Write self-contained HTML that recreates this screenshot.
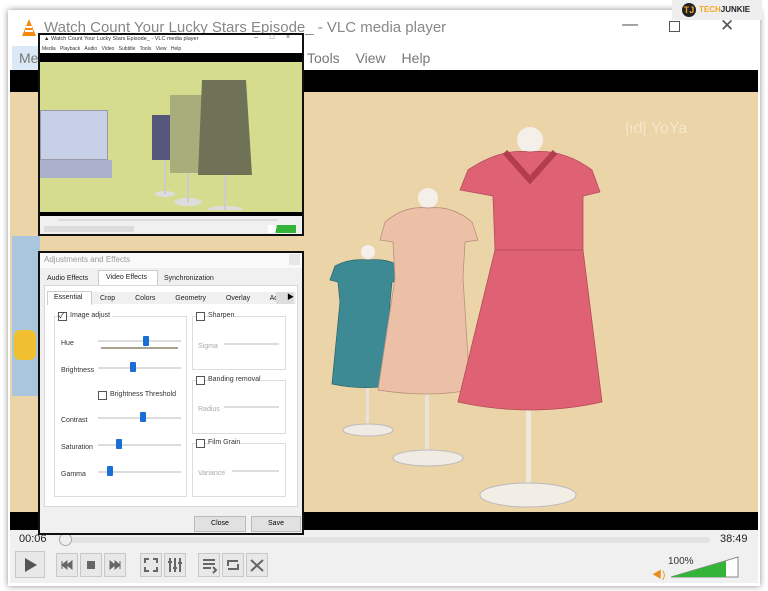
<!DOCTYPE html>
<html><head><meta charset="utf-8"><style>
*{margin:0;padding:0;box-sizing:border-box}
body{width:768px;height:591px;background:#fff;position:relative;overflow:hidden;font-family:"Liberation Sans","Noto Sans CJK SC",sans-serif}
.a{position:absolute}
.btn{position:absolute;top:553px;height:24px;border:1px solid #c8c8c8;background:#e8e8e8}
.lbl{position:absolute;font-size:7px;color:#333}
.trk{position:absolute;height:2px;background:#ddd}
.th{position:absolute;width:6px;height:10px;background:#1a6fd6;border-radius:1px}
.cb{position:absolute;width:9px;height:9px;border:1px solid #555;background:#fff}
.grp{position:absolute;border:1px solid #ddd}
</style></head><body>
<div class="a" style="left:8px;top:10px;width:752px;height:576px;box-shadow:0 0 6px rgba(0,0,0,.45)"></div>
<div class="a" style="left:10px;top:12px;width:748px;height:34px;background:#fff"></div>
<svg class="a" style="left:20px;top:18px" width="18" height="20"><path d="M9 1 L16 18 L2 18 Z" fill="#f28a10"/><path d="M6 9h6M5 13h8" stroke="#fff" stroke-width="2"/></svg>
<div class="a" style="left:44px;top:19px;font-size:15px;color:#888">Watch Count Your Lucky Stars Episode_ - VLC media player</div>
<div class="a" style="left:622px;top:16px;font-size:16px;color:#555">—</div>
<div class="a" style="left:669px;top:21px;width:11px;height:11px;border:1px solid #555"></div>
<div class="a" style="left:720px;top:16px;font-size:17px;color:#555">✕</div>
<div class="a" style="left:672px;top:0;width:90px;height:20px;background:#eee"></div>
<div class="a" style="left:682px;top:3px;width:14px;height:14px;border-radius:50%;background:#222;color:#f5a623;font-size:9px;text-align:center;line-height:14px;font-weight:bold">TJ</div>
<div class="a" style="left:699px;top:5px;font-size:8px;font-weight:bold;color:#222"><span style="color:#f5a623">TECH</span>JUNKIE</div>
<div class="a" style="left:10px;top:46px;width:748px;height:24px;background:#fff"></div>
<div class="a" style="left:12px;top:46px;width:40px;height:24px;background:#dbe9f7"></div>
<div class="a" style="left:19px;top:50px;font-size:14px;color:#777">Me</div>
<div class="a" style="left:307px;top:50px;font-size:14px;color:#777;word-spacing:12px">Tools View Help</div>
<div class="a" style="left:10px;top:70px;width:748px;height:22px;background:#000"></div>
<div class="a" style="left:10px;top:92px;width:748px;height:420px;background:#ecd4a9"></div>
<div class="a" style="left:12px;top:236px;width:28px;height:160px;background:#a9c6dc"></div>
<div class="a" style="left:14px;top:330px;width:22px;height:30px;background:#f0c030;border-radius:6px"></div>
<svg class="a" style="left:300px;top:90px" width="460" height="422">
<text x="325" y="43" font-size="16" fill="#f4e6cc" font-family="Liberation Sans">|ıd| YoYa</text>
<rect x="66" y="290" width="3" height="50" fill="#e8e2d8"/><ellipse cx="68" cy="340" rx="25" ry="6" fill="#f0ebe3" stroke="#bbb"/>
<circle cx="68" cy="162" r="7" fill="#f4efe8"/>
<path d="M35 176 Q50 168 68 170 Q86 168 100 176 L104 190 L92 192 L90 212 L88 296 Q60 300 32 294 L40 212 L38 192 L30 190 Z" fill="#3e8a94" stroke="#2c6a72" stroke-width="0.8"/>
<rect x="125" y="300" width="4" height="70" fill="#e8e2d8"/><ellipse cx="128" cy="368" rx="35" ry="8" fill="#f0ebe3" stroke="#bbb"/>
<circle cx="128" cy="108" r="10" fill="#f4efe8"/>
<path d="M85 132 Q105 115 128 118 Q152 115 172 132 L178 150 L165 152 L163 188 L170 300 Q128 308 78 300 L95 188 L93 152 L80 150 Z" fill="#ecc0a6" stroke="#b99080" stroke-width="0.8"/>
<rect x="226" y="320" width="5" height="85" fill="#ede7dc"/><ellipse cx="228" cy="405" rx="48" ry="12" fill="#f2ede5" stroke="#bbb"/>
<circle cx="230" cy="50" r="13" fill="#f4efe8"/>
<path d="M168 80 Q200 58 230 62 Q262 58 292 80 L300 102 L283 106 L283 160 L302 312 Q230 328 158 312 L195 160 L193 106 L160 100 Z" fill="#de6273" stroke="#b34a5a" stroke-width="0.8"/>
<path d="M205 62 L230 90 L255 62" fill="none" stroke="#b33d4e" stroke-width="6"/>
<path d="M195 160 L283 160" stroke="#b34a5a" stroke-width="0.8"/>
</svg>
<div class="a" style="left:10px;top:512px;width:748px;height:18px;background:#000"></div>
<div class="a" style="left:10px;top:530px;width:748px;height:53px;background:#f0f0f0"></div>
<div class="a" style="left:19px;top:533px;font-size:11px;color:#222">00:06</div>
<div class="a" style="left:60px;top:537px;width:650px;height:6px;background:#e2e2e2;border-radius:3px"></div>
<div class="a" style="left:59px;top:533px;width:13px;height:13px;border-radius:50%;background:#eee;border:1px solid #aaa"></div>
<div class="a" style="left:720px;top:533px;font-size:11px;color:#222">38:49</div>
<div class="btn" style="left:15px;width:30px;height:27px;top:551px"><svg width="28" height="26"><path d="M9 6 L21 13 L9 20Z" fill="#555"/></svg></div>
<div class="btn" style="left:56px;width:22px"><svg width="20" height="22"><path d="M5 7v8M15 7l-5 4 5 4zM10 7l-5 4 5 4z" fill="#666" stroke="#666"/></svg></div>
<div class="btn" style="left:80px;width:22px"><svg width="20" height="22"><rect x="6" y="7" width="8" height="8" fill="#666"/></svg></div>
<div class="btn" style="left:104px;width:22px"><svg width="20" height="22"><path d="M15 7v8M5 7l5 4-5 4zM10 7l5 4-5 4z" fill="#666" stroke="#666"/></svg></div>
<div class="btn" style="left:140px;width:22px"><svg width="20" height="22"><path d="M4 9V5h4M12 5h4v4M16 13v4h-4M8 17H4v-4" fill="none" stroke="#666" stroke-width="2"/></svg></div>
<div class="btn" style="left:164px;width:22px"><svg width="20" height="22"><path d="M5 4v14M10 4v14M15 4v14M3 8h4M8 14h4M13 9h4" stroke="#666" stroke-width="2"/></svg></div>
<div class="btn" style="left:198px;width:22px"><svg width="20" height="22"><path d="M4 6h12M4 10h12M4 14h8M14 13l3 3-3 3" fill="none" stroke="#666" stroke-width="2"/></svg></div>
<div class="btn" style="left:222px;width:22px"><svg width="20" height="22"><path d="M5 12V7h10M15 10v5H5" fill="none" stroke="#666" stroke-width="2"/></svg></div>
<div class="btn" style="left:246px;width:22px"><svg width="20" height="22"><path d="M4 6l12 11M4 17L16 6" stroke="#666" stroke-width="2"/></svg></div>
<div class="a" style="left:652px;top:566px;font-size:10px;color:#e8901a">◀)</div>
<div class="a" style="left:668px;top:556px;font-size:10px;color:#333">100%</div>
<svg class="a" style="left:670px;top:556px" width="70" height="22"><path d="M1 21 L68 1 L68 21 Z" fill="#fff" stroke="#888"/><path d="M1 21 L56 5 L56 21 Z" fill="#34b53a"/></svg>
<div class="a" style="left:38px;top:33px;width:266px;height:203px;background:#fff;border:2px solid #111"></div>
<div class="a" style="left:44px;top:36px;font-size:5.5px;color:#333">▲ Watch Count Your Lucky Stars Episode_ - VLC media player</div>
<div class="a" style="left:254px;top:34px;font-size:7px;color:#555;word-spacing:10px">– □ ×</div>
<div class="a" style="left:42px;top:46px;font-size:5px;color:#333;word-spacing:3px">Media Playback Audio Video Subtitle Tools View Help</div>
<div class="a" style="left:40px;top:53px;width:262px;height:9px;background:#000"></div>
<div class="a" style="left:40px;top:62px;width:262px;height:150px;background:#d6dc8e"></div>
<div class="a" style="left:40px;top:110px;width:68px;height:50px;background:#c8d0e8;border:1px solid #99a"></div>
<div class="a" style="left:40px;top:160px;width:72px;height:18px;background:#aab0cc"></div>
<svg class="a" style="left:140px;top:70px" width="140" height="140">
<path d="M12 45h22l-2 45h-20z" fill="#55577a"/><ellipse cx="25" cy="124" rx="10" ry="3" fill="#ddd"/><rect x="24" y="90" width="2" height="34" fill="#ccc"/>
<path d="M30 25h36l-2 78h-34z" fill="#a8ad7c"/><ellipse cx="48" cy="132" rx="14" ry="4" fill="#ddd"/><rect x="47" y="103" width="2" height="29" fill="#ccc"/>
<path d="M62 10h44l6 95h-54z" fill="#707258"/><ellipse cx="85" cy="140" rx="18" ry="4" fill="#ddd"/><rect x="84" y="105" width="2" height="35" fill="#ccc"/>
</svg>
<div class="a" style="left:40px;top:212px;width:262px;height:4px;background:#000"></div>
<div class="a" style="left:40px;top:216px;width:262px;height:18px;background:#f0f0f0"></div>
<div class="a" style="left:58px;top:219px;width:220px;height:2px;background:#ddd"></div>
<div class="a" style="left:44px;top:226px;width:90px;height:6px;background:#ddd"></div>
<div class="a" style="left:268px;top:225px;width:28px;height:8px;background:linear-gradient(100deg,#fff 30%,#34b53a 30%)"></div>
<div class="a" style="left:38px;top:251px;width:266px;height:284px;background:#f0f0f0;border:2px solid #111"></div>
<div class="a" style="left:40px;top:253px;width:262px;height:15px;background:#fafafa"></div>
<div class="a" style="left:44px;top:255px;font-size:8px;color:#999">Adjustments and Effects</div>
<div class="a" style="left:289px;top:254px;width:11px;height:11px;background:#e6e6e6"></div>
<div class="a" style="left:47px;top:275px;font-size:7px;color:#222">Audio Effects</div>
<div class="a" style="left:98px;top:270px;width:60px;height:15px;background:#fff;border:1px solid #ccc;border-bottom:none"></div>
<div class="a" style="left:106px;top:274px;font-size:7px;color:#222">Video Effects</div>
<div class="a" style="left:164px;top:275px;font-size:7px;color:#222">Synchronization</div>
<div class="a" style="left:44px;top:285px;width:254px;height:222px;background:#fff;border:1px solid #d8d8d8"></div>
<div class="a" style="left:47px;top:291px;width:45px;height:14px;background:#fff;border:1px solid #ccc;border-bottom:none"></div>
<div class="a" style="left:92px;top:292px;width:204px;height:12px;background:#f0f0f0"></div>
<div class="a" style="left:54px;top:294px;font-size:7px;color:#222">Essential</div>
<div class="a" style="left:100px;top:295px;font-size:7px;color:#222;word-spacing:18px">Crop Colors Geometry Overlay Adv</div>
<div class="a" style="left:276px;top:292px;width:18px;height:12px;background:#ddd;font-size:7px;text-align:right">▶</div>
<div class="grp" style="left:54px;top:316px;width:133px;height:181px"></div>
<div class="cb" style="left:58px;top:312px;font-size:7px;line-height:7px">✓</div>
<div class="lbl" style="left:70px;top:312px;background:#fff;padding-right:2px">Image adjust</div>
<div class="lbl" style="left:61px;top:340px">Hue</div>
<div class="trk" style="left:98px;top:340px;width:83px"></div><div class="th" style="left:143px;top:336px"></div>
<div class="a" style="left:101px;top:347px;width:77px;height:2px;background:#aaa392"></div>
<div class="lbl" style="left:61px;top:367px">Brightness</div>
<div class="trk" style="left:98px;top:367px;width:83px"></div><div class="th" style="left:130px;top:362px"></div>
<div class="cb" style="left:98px;top:391px"></div><div class="lbl" style="left:110px;top:391px">Brightness Threshold</div>
<div class="lbl" style="left:61px;top:417px">Contrast</div>
<div class="trk" style="left:98px;top:417px;width:83px"></div><div class="th" style="left:140px;top:412px"></div>
<div class="lbl" style="left:61px;top:444px">Saturation</div>
<div class="trk" style="left:98px;top:444px;width:83px"></div><div class="th" style="left:116px;top:439px"></div>
<div class="lbl" style="left:61px;top:471px">Gamma</div>
<div class="trk" style="left:98px;top:471px;width:83px"></div><div class="th" style="left:107px;top:466px"></div>
<div class="grp" style="left:192px;top:316px;width:94px;height:54px"></div>
<div class="cb" style="left:196px;top:312px"></div><div class="lbl" style="left:208px;top:312px;background:#fff">Sharpen</div>
<div class="lbl" style="left:198px;top:343px;color:#aaa">Sigma</div><div class="trk" style="left:224px;top:343px;width:55px"></div>
<div class="grp" style="left:192px;top:380px;width:94px;height:54px"></div>
<div class="cb" style="left:196px;top:376px"></div><div class="lbl" style="left:208px;top:376px;background:#fff">Banding removal</div>
<div class="lbl" style="left:198px;top:406px;color:#aaa">Radius</div><div class="trk" style="left:224px;top:406px;width:55px"></div>
<div class="grp" style="left:192px;top:443px;width:94px;height:54px"></div>
<div class="cb" style="left:196px;top:439px"></div><div class="lbl" style="left:208px;top:439px;background:#fff">Film Grain</div>
<div class="lbl" style="left:198px;top:470px;color:#aaa">Variance</div><div class="trk" style="left:232px;top:470px;width:47px"></div>
<div class="a" style="left:194px;top:516px;width:52px;height:16px;background:#e1e1e1;border:1px solid #bbb;font-size:7px;text-align:center;line-height:14px">Close</div>
<div class="a" style="left:251px;top:516px;width:50px;height:16px;background:#e1e1e1;border:1px solid #bbb;font-size:7px;text-align:center;line-height:14px">Save</div>
</body></html>
